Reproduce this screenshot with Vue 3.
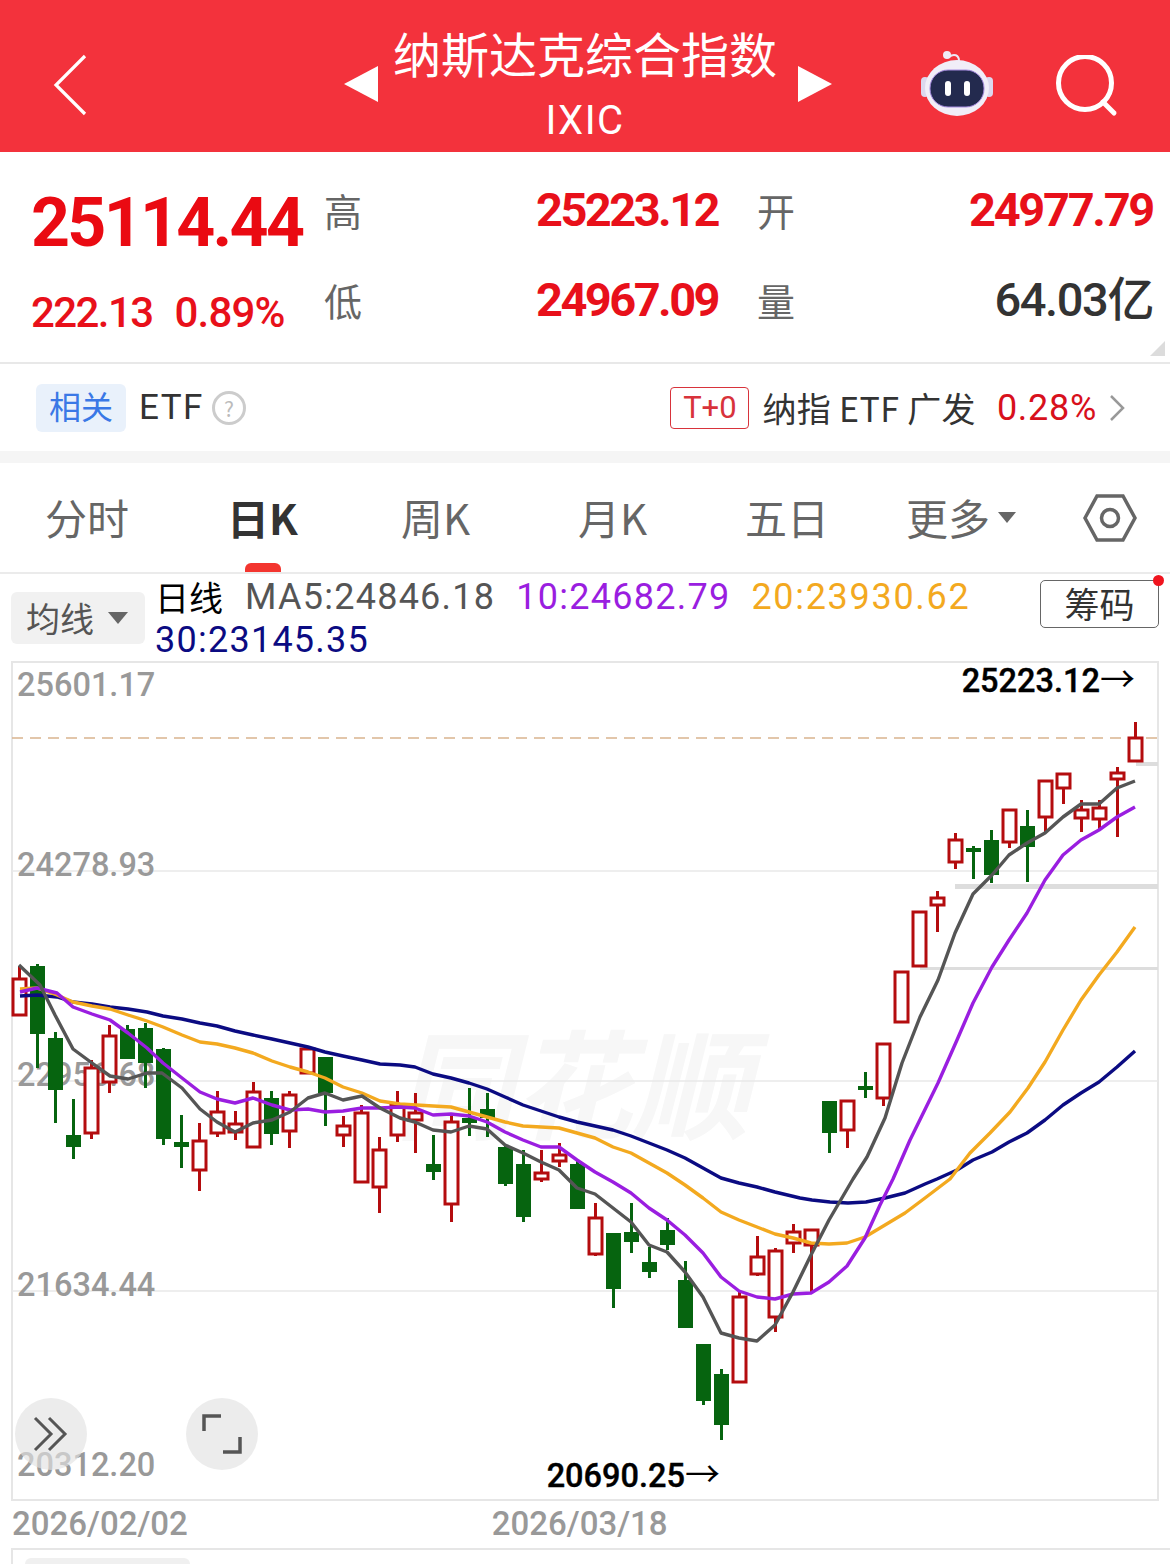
<template>
  <div class="page">
    <header class="top">
      <svg class="back" width="34" height="62" viewBox="0 0 34 62"><path d="M32 2 3 31l29 29" fill="none" stroke="#fff" stroke-width="3.2" /></svg>
      <div class="title">
        <i class="tri left"></i>
        <div class="names">
          <div class="cn">纳斯达克综合指数</div>
          <div class="code">IXIC</div>
        </div>
        <i class="tri right"></i>
      </div>
      <svg class="robot" width="74" height="68" viewBox="0 0 74 68">
        <path d="M29 8c5-4 10-2 10 4" fill="none" stroke="#ece6f6" stroke-width="2" />
        <circle cx="27" cy="6" r="4" fill="#f0ecf8" />
        <rect x="1" y="28" width="8" height="20" rx="4" fill="#dcd8ee" />
        <rect x="65" y="28" width="8" height="20" rx="4" fill="#dcd8ee" />
        <ellipse cx="37" cy="39" rx="32" ry="28" fill="#f1eef8" />
        <rect x="10" y="21" width="54" height="37" rx="18" fill="#232a4e" stroke="#a78ce0" stroke-width="1" />
        <rect x="25" y="32" width="6" height="15" rx="3" fill="#fff" />
        <rect x="44" y="32" width="6" height="15" rx="3" fill="#fff" />
      </svg>
      <svg class="search" width="62" height="62" viewBox="0 0 62 62">
        <circle cx="29" cy="28" r="26.5" fill="none" stroke="#fff" stroke-width="5" />
        <path d="M47 47l11 11" stroke="#fff" stroke-width="5" stroke-linecap="round" />
      </svg>
    </header>

    <section class="quote">
      <div class="price">25114.44</div>
      <div class="lbl">高</div>
      <div class="val">25223.12</div>
      <div class="lbl">开</div>
      <div class="val end">24977.79</div>
      <div class="change"><span>222.13</span><span class="rate">0.89%</span></div>
      <div class="lbl low">低</div>
      <div class="val low">24967.09</div>
      <div class="lbl low">量</div>
      <div class="val low end dark">64.03亿</div>
      <i class="corner"></i>
    </section>

    <section class="etf">
      <span class="tag">相关</span>
      <span class="etf-name">ETF</span>
      <span class="help">?</span>
      <span class="spacer"></span>
      <span class="t0">T+0</span>
      <span class="fund">纳指 ETF 广发</span>
      <span class="pct">0.28%</span>
      <svg width="16" height="28" viewBox="0 0 16 28"><path d="M2 2l12 12L2 26" fill="none" stroke="#999" stroke-width="2.5" /></svg>
    </section>

    <nav class="tabs">
      <span v-for="t in tabs" :key="t.name" class="tab" :class="{ on: t.on }" :style="{ width: t.w + 'px' }">{{ t.name }}</span>
      <span class="more">更多<i></i></span>
      <svg class="hex" width="54" height="50" viewBox="0 0 54 50">
        <path d="M2 25 14 3h26l12 22-12 22H14z" fill="none" stroke="#666" stroke-width="3.5" />
        <circle cx="27" cy="25" r="8.5" fill="none" stroke="#666" stroke-width="3.5" />
      </svg>
    </nav>

    <section class="legend">
      <div class="ma-btn">均线<i></i></div>
      <div class="ma-text">
        <span class="daily">日线</span>
        <span class="m5">MA5:24846.18</span>
        <span class="m10">10:24682.79</span>
        <span class="m20">20:23930.62</span>
        <span class="m30">30:23145.35</span>
      </div>
      <div class="chip">筹码</div>
    </section>

    <div class="chart">
      <svg width="1148" height="840" viewBox="11 661 1148 840">
        <rect x="12" y="662" width="1146" height="838" fill="#fff" stroke="#e6e6e6" stroke-width="2" />
        <text x="573" y="1130" class="mark" text-anchor="middle">同花顺</text>
        <line v-for="y in [871, 1081, 1291]" :key="y" x1="12" x2="1158" :y1="y" :y2="y" stroke="#e8e8e8" stroke-width="1.5" />
        <line x1="12" x2="1158" y1="738" y2="738" stroke="#d9b48e" stroke-width="1.5" stroke-dasharray="11 7" />
        <rect x="1136" y="762" width="22" height="4" fill="#ddd" />
        <rect x="955" y="884" width="203" height="5" fill="#ddd" />
        <rect x="920" y="967" width="238" height="3" fill="#ddd" />

        <text v-for="a in axis" :key="a.t" x="17" :y="a.y" class="axis">{{ a.t }}</text>

        <g v-for="(c, i) in candles" :key="i">
          <line :x1="cx(i)" :x2="cx(i)" :y1="c[2]" :y2="c[3]" :stroke="c[4] ? red : green" stroke-width="3" />
          <rect v-if="c[4]" :x="cx(i) - 6.5" :y="c[0]" width="13" :height="c[1] - c[0]" fill="#fff" :stroke="red" stroke-width="3" />
          <rect v-else :x="cx(i) - 7.5" :y="c[0]" width="15" :height="c[1] - c[0]" :fill="green" />
        </g>

        <polyline :points="ma30" class="ma" stroke="#0b0b82" />
        <polyline :points="ma20" class="ma" stroke="#f3a91f" />
        <polyline :points="ma10" class="ma" stroke="#9a1ee0" />
        <polyline :points="ma5" class="ma" stroke="#555" />

        <text x="1135" y="692" class="peak" text-anchor="end">25223.12<tspan class="arrow">→</tspan></text>
        <text x="720" y="1487" class="peak" text-anchor="end">20690.25<tspan class="arrow">→</tspan></text>
      </svg>

      <button class="round r1">
        <svg width="36" height="36" viewBox="0 0 36 36"><path d="M2 2l16 16L2 34M16 2l16 16-16 16" fill="none" stroke="#555" stroke-width="3" /></svg>
      </button>
      <button class="round r2">
        <svg width="40" height="40" viewBox="0 0 40 40"><path d="M2 17V2h17M38 23v15H21" fill="none" stroke="#555" stroke-width="3.5" /></svg>
      </button>
    </div>

    <div class="dates">
      <span>2026/02/02</span>
      <span>2026/03/18</span>
    </div>
    <div class="next"><i></i></div>
  </div>
</template>

<script setup>
const red = "#b40c0e";
const green = "#06640f";

const tabs = [
  { name: "分时", w: 182 },
  { name: "日K", w: 174, on: true },
  { name: "周K", w: 177 },
  { name: "月K", w: 167 },
  { name: "五日", w: 161 },
];

const axis = [
  { t: "25601.17", y: 696 },
  { t: "24278.93", y: 876 },
  { t: "22956.68", y: 1086 },
  { t: "21634.44", y: 1296 },
  { t: "20312.20", y: 1476 },
];

const cx = (i) => 19.5 + i * 18;

// top, bottom, high, low, up
const candles = [
  [979, 1015, 966, 1016, 1], [966, 1034, 964, 1068, 0], [1038, 1090, 1032, 1123, 0], [1135, 1147, 1099, 1159, 0],
  [1068, 1133, 1060, 1139, 1], [1036, 1082, 1025, 1093, 1], [1029, 1059, 1025, 1059, 0], [1028, 1063, 1023, 1088, 0],
  [1049, 1139, 1048, 1145, 0], [1142, 1147, 1115, 1168, 0], [1141, 1170, 1123, 1191, 1], [1112, 1133, 1091, 1137, 1],
  [1124, 1132, 1111, 1140, 1], [1092, 1147, 1082, 1147, 1], [1098, 1134, 1091, 1145, 0], [1095, 1131, 1091, 1148, 1],
  [1049, 1073, 1048, 1074, 1], [1057, 1093, 1057, 1126, 0], [1126, 1135, 1116, 1147, 1], [1113, 1182, 1105, 1183, 1],
  [1150, 1187, 1137, 1213, 1], [1105, 1135, 1091, 1142, 1], [1113, 1120, 1093, 1153, 1], [1164, 1172, 1135, 1180, 0],
  [1122, 1204, 1115, 1222, 1], [1118, 1123, 1088, 1136, 0], [1109, 1118, 1093, 1137, 0], [1147, 1184, 1145, 1186, 0],
  [1164, 1217, 1150, 1222, 0], [1173, 1179, 1150, 1182, 1], [1155, 1161, 1143, 1167, 1], [1164, 1209, 1160, 1209, 0],
  [1218, 1254, 1203, 1256, 1], [1233, 1289, 1233, 1308, 0], [1232, 1242, 1203, 1253, 0], [1262, 1272, 1247, 1278, 0],
  [1230, 1245, 1218, 1250, 0], [1280, 1328, 1261, 1328, 0], [1344, 1401, 1344, 1405, 0], [1374, 1425, 1369, 1440, 0],
  [1297, 1382, 1291, 1382, 1], [1257, 1274, 1236, 1276, 1], [1251, 1317, 1248, 1332, 1], [1232, 1243, 1224, 1253, 1],
  [1230, 1245, 1230, 1292, 1], [1101, 1133, 1101, 1153, 0], [1101, 1130, 1101, 1148, 1], [1086, 1090, 1072, 1098, 0],
  [1044, 1098, 1044, 1106, 1], [972, 1022, 972, 1022, 1], [912, 966, 912, 966, 1], [898, 905, 891, 932, 1],
  [840, 862, 833, 869, 1], [848, 852, 846, 879, 0], [840, 875, 830, 883, 0], [810, 842, 810, 848, 1],
  [826, 847, 810, 882, 0], [781, 817, 781, 832, 1], [774, 788, 774, 804, 1], [810, 818, 800, 832, 1],
  [808, 819, 800, 830, 1], [773, 779, 767, 837, 1], [738, 761, 722, 761, 1],
];

const ma5 = "19,965 40,985 55,1015 73,1049 92,1063 110,1076 128,1079 147,1073 162,1073 182,1088 200,1109 217,1122 235,1132 253,1123 272,1120 290,1112 308,1098 325,1093 343,1100 362,1096 380,1108 400,1118 415,1122 433,1130 451,1132 469,1126 487,1129 505,1145 523,1153 541,1162 559,1170 577,1188 595,1194 613,1208 631,1222 649,1245 667,1252 685,1272 703,1297 721,1333 739,1338 757,1341 775,1325 793,1292 811,1255 829,1220 853,1179 867,1157 885,1118 902,1063 920,1017 938,980 955,933 973,894 992,875 1009,855 1027,843 1045,833 1063,817 1081,804 1099,804 1117,788 1135,781";
const ma10 = "20,992 37,988 57,993 73,1007 92,1014 110,1020 128,1033 147,1048 163,1063 182,1078 200,1092 217,1099 235,1103 253,1098 272,1105 290,1110 308,1109 325,1112 343,1111 362,1108 380,1108 400,1107 415,1108 433,1115 451,1114 469,1116 487,1122 505,1132 523,1140 541,1147 559,1147 577,1160 595,1172 613,1182 631,1193 649,1208 667,1220 685,1235 703,1253 721,1277 739,1291 757,1297 775,1299 793,1294 811,1293 829,1282 847,1266 865,1238 880,1205 893,1179 910,1140 938,1083 957,1040 973,1003 992,967 1009,940 1027,913 1045,880 1063,855 1081,840 1099,830 1117,817 1135,807";
const ma20 = "20,989 37,988 57,995 73,1002 92,1006 110,1009 128,1015 147,1021 163,1027 182,1035 200,1042 217,1044 235,1048 253,1053 272,1061 290,1067 308,1072 325,1078 343,1087 362,1093 380,1101 400,1104 433,1106 451,1107 469,1112 487,1117 505,1122 523,1126 541,1127 559,1128 577,1133 595,1138 613,1147 631,1153 649,1163 667,1173 685,1185 703,1198 721,1212 739,1220 757,1227 775,1234 793,1238 811,1243 829,1244 847,1243 865,1237 885,1225 905,1213 925,1198 950,1179 970,1153 990,1133 1010,1112 1028,1088 1045,1062 1063,1030 1081,1000 1099,975 1117,952 1135,927";
const ma30 = "20,996 37,995 57,997 73,1002 92,1004 110,1007 128,1009 147,1012 163,1016 182,1019 200,1023 217,1026 235,1031 253,1035 272,1039 290,1043 308,1047 325,1052 343,1056 362,1060 380,1064 400,1065 415,1067 433,1074 451,1078 469,1083 487,1089 505,1097 523,1105 541,1111 559,1117 577,1122 595,1126 613,1130 631,1136 649,1143 667,1150 685,1158 703,1168 721,1178 739,1183 757,1187 775,1192 800,1198 812,1200 830,1202 848,1203 866,1202 885,1198 905,1193 925,1184 937,1179 957,1170 973,1160 992,1152 1009,1142 1027,1133 1045,1120 1063,1105 1081,1093 1099,1082 1117,1067 1135,1051";
</script>

<style scoped>
.page { width:1170px; height:1564px; overflow:hidden; background:#fff; font-family:Roboto, "Noto Sans CJK SC", sans-serif; }

.top { height:152px; background:#f3323c; display:flex; align-items:center; position:relative; color:#fff; }
.back { margin:18px 0 0 53px; flex:none; }
.title { position:absolute; left:344px; top:0; width:488px; height:152px; display:flex; align-items:center; justify-content:space-between; }
.names { text-align:center; font-family:"Noto Sans CJK SC", sans-serif; align-self:flex-start; margin:24px 6px 0 0; }
.cn { font-size:48px; line-height:56px; }
.code { font-family:Roboto, sans-serif; font-size:40px; line-height:46px; margin-top:18px; letter-spacing:1.5px; }
.tri { width:0; height:0; border-top:18px solid transparent; border-bottom:18px solid transparent; margin-top:16px; }
.tri.left { border-right:34px solid #fff; }
.tri.right { border-left:34px solid #fff; }
.robot { position:absolute; left:920px; top:49px; }
.search { position:absolute; left:1056px; top:55px; }

.quote { position:relative; height:210px; border-bottom:2px solid #e8e8e8; padding:0 17px 0 31px; display:grid; grid-template-columns:293px 212px 221px 62px 1fr; grid-template-rows:104px 106px; align-items:start; color:#666; }
.price { font-size:68px; font-weight:700; color:#ea0a12; letter-spacing:-2.7px; line-height:68px; margin-top:37px; white-space:nowrap; }
.lbl { font-family:"Noto Sans CJK SC", sans-serif; font-size:38px; line-height:44px; margin-top:36px; }
.lbl.low { margin-top:22px; }
.val { font-size:47px; font-weight:700; color:#e8101a; letter-spacing:-2.55px; line-height:52px; margin-top:32px; white-space:nowrap; }
.val.low { margin-top:18px; }
.val.end { text-align:right; letter-spacing:-2.3px; }
.val.dark { color:#333; font-weight:500; letter-spacing:-1.4px; }
.change { font-size:42px; font-weight:500; color:#e8101a; display:flex; gap:22px; letter-spacing:-1.6px; line-height:50px; margin-top:32px; white-space:nowrap; }
.rate { letter-spacing:-.8px; }
.corner { position:absolute; right:5px; bottom:6px; width:0; height:0; border-left:15px solid transparent; border-bottom:15px solid #dcdcdc; }

.etf { height:87px; display:flex; align-items:center; padding:0 45px 0 36px; font-family:"Noto Sans CJK SC", sans-serif; border-bottom:12px solid #f5f5f5; color:#333; }
.tag { width:90px; height:48px; border-radius:6px; background:#e9f1fb; color:#3a78e6; font-size:32px; line-height:43px; text-align:center; }
.etf-name { font-family:Roboto, sans-serif; font-size:35px; margin-left:13px; letter-spacing:1.5px; }
.help { width:28px; height:28px; border:3px solid #ccc; border-radius:50%; color:#bbb; font-size:21px; line-height:28px; text-align:center; margin-left:8px; }
.spacer { flex:1; }
.t0 { width:77px; height:40px; border:1px solid #d8333b; border-radius:4px; color:#d8333b; font-family:Roboto, sans-serif; font-size:31px; line-height:40px; text-align:center; }
.fund { font-size:34px; letter-spacing:.35px; margin-left:13px; white-space:nowrap; }
.pct { font-family:Roboto, sans-serif; font-size:36px; letter-spacing:.7px; color:#d8101c; margin:0 12px 0 21px; }

.tabs { height:109px; display:flex; align-items:center; padding-left:45px; border-bottom:2px solid #ebebeb; position:relative; color:#666; font-family:"Noto Sans CJK SC", sans-serif; font-size:42px; }
.tab { flex:none; line-height:50px; margin-top:-2px; }
.tab.on { color:#333; font-weight:700; }
.tabs::after { content:""; position:absolute; left:245px; bottom:0; width:36px; height:9px; background:#f3352f; border-radius:6px 6px 0 0; }
.more { display:flex; align-items:center; color:#666; margin-top:-2px; }
.more i { width:0; height:0; border-left:9px solid transparent; border-right:9px solid transparent; border-top:11px solid #666; margin:2px 0 0 8px; }
.hex { position:absolute; left:1083px; top:30px; }

.legend { height:87px; display:flex; position:relative; }
.ma-btn { position:absolute; left:11px; top:18px; width:134px; height:52px; background:#f1f1f1; border-radius:6px; color:#555; font-family:"Noto Sans CJK SC", sans-serif; font-size:34px; line-height:52px; padding-left:15px; box-sizing:border-box; display:flex; align-items:center; }
.ma-btn i { width:0; height:0; border-left:10px solid transparent; border-right:10px solid transparent; border-top:12px solid #666; margin-left:14px; }
.ma-text { margin-left:155px; width:860px; display:flex; flex-wrap:wrap; column-gap:22px; font-size:36px; line-height:42px; letter-spacing:1.25px; padding-top:2px; }
.daily { color:#000; font-family:"Noto Sans CJK SC", sans-serif; font-size:34px; letter-spacing:0; }
.m5 { color:#555; }
.m10 { color:#9a1ee0; margin-left:-1px; }
.m20 { color:#f3a91f; letter-spacing:1.7px; margin-left:-1px; }
.m30 { color:#0b0b82; }
.chip { position:absolute; left:1040px; top:6px; width:119px; height:48px; box-sizing:border-box; border:1px solid #666; border-radius:5px; color:#333; font-family:"Noto Sans CJK SC", sans-serif; font-size:35px; line-height:44px; text-align:center; }
.chip::after { content:""; position:absolute; right:-6px; top:-6px; width:11px; height:11px; background:#f0141e; border-radius:50%; }

.chart { position:relative; margin-left:11px; width:1148px; height:840px; }
.chart svg { display:block; }
.axis { font-family:Roboto, sans-serif; font-size:32.5px; fill:#999; font-weight:500; }
.peak { font-family:Roboto, sans-serif; font-size:32.5px; font-weight:500; fill:#000; stroke:#000; stroke-width:.4; }
.arrow { font-family:"Noto Sans CJK SC", sans-serif; font-weight:400; stroke:none; font-size:35px; }
.mark { font-family:"Noto Sans CJK SC", sans-serif; font-size:118px; font-weight:700; font-style:italic; fill:#f7f7f7; }
.ma { fill:none; stroke-width:3.4; stroke-linejoin:round; }
.round { position:absolute; top:737px; width:72px; height:72px; border:0; border-radius:50%; background:rgba(226,226,226,.65); padding:0; display:flex; align-items:center; justify-content:center; }
.r1 { left:4px; }
.r2 { left:175px; }

.dates { display:flex; height:47px; padding-left:12px; gap:304px; font-size:33px; font-weight:500; color:#999; line-height:46px; }
.next { margin:0 0 0 11px; border:2px solid #e6e6e6; border-right:0; height:40px; padding:8px 0 0 12px; }
.next i { display:block; width:165px; height:20px; background:#f0f0f0; border-radius:6px; }
</style>

<style>
body { margin:0; background:#fff; }
</style>
